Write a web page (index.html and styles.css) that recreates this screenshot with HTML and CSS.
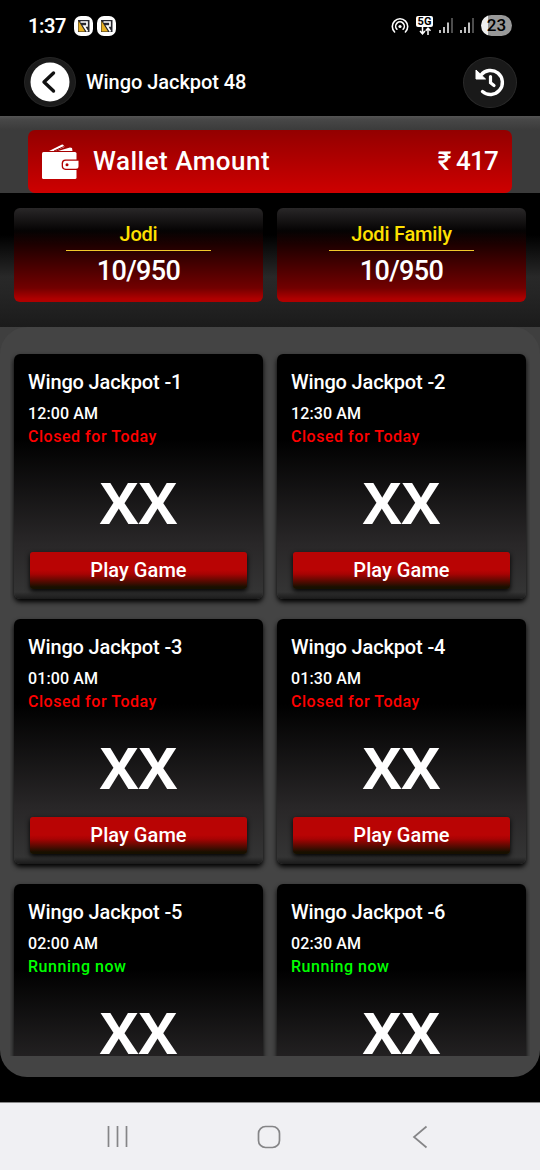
FILE: index.html
```html
<!DOCTYPE html>
<html lang="en">
<head>
<meta charset="utf-8">
<title>Wingo Jackpot 48</title>
<link rel="stylesheet" href="styles.css">
</head>
<body>
<div class="screen">
  <div class="status">
    <span class="clock">1:37</span>
    <svg class="app" viewBox="0 0 19 20"><rect width="19" height="20" rx="7" fill="#fff"/><rect x="4" y="4" width="11.500" height="12" fill="#26262c"/><path d="M4.500 5l6.500 10.500H4.500z" fill="#e8b020"/><path d="M6.500 6H13v4h-3l3.500 5.500" fill="none" stroke="#fff" stroke-width="1.700"/></svg>
    <svg class="app" viewBox="0 0 19 20"><rect width="19" height="20" rx="7" fill="#fff"/><rect x="4" y="4" width="11.500" height="12" fill="#26262c"/><path d="M4.500 5l6.500 10.500H4.500z" fill="#e8b020"/><path d="M6.500 6H13v4h-3l3.500 5.500" fill="none" stroke="#fff" stroke-width="1.700"/></svg>
    <span class="spacer"></span>
    <svg class="hotspot" viewBox="0 0 18 18" fill="none" stroke="#fff" stroke-width="1.600" stroke-linecap="round"><path d="M3.600 15A7.700 7.700 0 1 1 14.400 15M5.900 12.200a4.300 4.300 0 1 1 6.200 0"/><circle cx="9" cy="9.500" r="1.600" fill="#fff" stroke="none"/></svg>
    <span class="net"><span class="fiveg">5G</span><svg width="14" height="8" viewBox="0 0 14 8" fill="none" stroke="#fff" stroke-width="1.500"><path d="M4.500 0v6.500M2 4l2.500 2.800L7 4M10 8V1.200M7.700 3.800L10 1.200l2.500 2.600"/></svg></span>
    <svg class="signal" viewBox="0 0 14 15" stroke-width="1.500"><path d="M1 12v3M5 9v6M9 4.500V15" stroke="#fff"/><path d="M13 0v15" stroke="#666"/></svg>
    <svg class="signal" viewBox="0 0 14 15" stroke-width="1.500"><path d="M1 12v3M5 9v6M9 4.500V15" stroke="#fff"/><path d="M13 0v15" stroke="#666"/></svg>
    <span class="battery">23</span>
  </div>
  <header class="header">
    <span class="back"><svg width="40" height="40" viewBox="0 0 40 40"><circle cx="20" cy="20" r="19.500" fill="#fff"/><path d="M23.500 11L14 20l9.500 9" fill="none" stroke="#111" stroke-width="3.400" stroke-linecap="round" stroke-linejoin="round"/></svg></span>
    <h1>Wingo Jackpot 48</h1>
    <span class="history"><svg width="32" height="30" viewBox="0 0 32 30"><path d="M7 8A12 12 0 1 1 8.500 24.500" fill="none" stroke="#fff" stroke-width="3.400" stroke-linecap="round"/><path d="M2 3v9h9.500z" fill="#fff" stroke="#fff" stroke-linejoin="round"/><path d="M16.500 9.500v6.300l3.500 2.700" fill="none" stroke="#fff" stroke-width="3.200" stroke-linecap="round"/></svg></span>
  </header>
  <section class="strip">
    <div class="wallet">
      <svg width="37" height="35" viewBox="0 0 37 35"><path d="M7 7L19.500.8q1.500-.6 2.200.7l.8 1.500L13 7zM16 7l12-3.500 2 .5.500 3z" fill="#fff"/><path d="M12 7L22 2.500" stroke="#9a0000"/><rect y="8" width="34.500" height="27" rx="1.500" fill="#fff"/><path d="M37 15.500H23.500q-3.800 0-3.800 3.800v2.800q0 3.800 3.800 3.800H37z" fill="#b00000"/><path d="M36.500 16.700H24q-3 0-3 3v2q0 3 3 3h10q2.500 0 2.500-2.500z" fill="#fff"/><circle cx="25" cy="20.700" r="1.500" fill="#b00000"/></svg>
      <span class="wallet-label">Wallet Amount</span>
      <span class="amount">₹ 417</span>
    </div>
  </section>
  <section class="rates">
    <div class="rate"><span class="kind">Jodi</span><strong>10/950</strong></div>
    <div class="rate"><span class="kind">Jodi Family</span><strong>10/950</strong></div>
  </section>
  <main class="floor">
    <div class="panel">
      <div class="games">
        <article class="game"><h2>Wingo Jackpot -1</h2><time>12:00 AM</time><p class="closed">Closed for Today</p><b class="result">XX</b><div class="play">Play Game</div></article>
        <article class="game"><h2>Wingo Jackpot -2</h2><time>12:30 AM</time><p class="closed">Closed for Today</p><b class="result">XX</b><div class="play">Play Game</div></article>
        <article class="game"><h2>Wingo Jackpot -3</h2><time>01:00 AM</time><p class="closed">Closed for Today</p><b class="result">XX</b><div class="play">Play Game</div></article>
        <article class="game"><h2>Wingo Jackpot -4</h2><time>01:30 AM</time><p class="closed">Closed for Today</p><b class="result">XX</b><div class="play">Play Game</div></article>
        <article class="game"><h2>Wingo Jackpot -5</h2><time>02:00 AM</time><p class="running">Running now</p><b class="result">XX</b></article>
        <article class="game"><h2>Wingo Jackpot -6</h2><time>02:30 AM</time><p class="running">Running now</p><b class="result">XX</b></article>
      </div>
    </div>
  </main>
  <nav class="nav">
    <svg width="22" height="22" viewBox="0 0 22 22"><path d="M1.500 0v21M10.500 0v21M19.500 0v21" stroke="#858587" stroke-width="1.700"/></svg>
    <svg width="24" height="24" viewBox="0 0 24 24"><rect x="1.500" y="1.500" width="21" height="21" rx="7" fill="none" stroke="#858587" stroke-width="1.700"/></svg>
    <svg width="16" height="24" viewBox="0 0 16 24"><path d="M14.500 1.500L2 12l12.500 10.500" fill="none" stroke="#858587" stroke-width="1.700"/></svg>
  </nav>
</div>
</body>
</html>
```

FILE: styles.css
```css
* { box-sizing: border-box; }
body, h1, h2, p { margin: 0; }
body { background: #000; color: #fff; font-family: Roboto, "Noto Sans", sans-serif; font-weight: 500; }
svg { display: block; flex: none; }
.screen { width: 540px; height: 1170px; display: flex; flex-direction: column; overflow: hidden; }
.status { height: 51px; flex: none; display: flex; align-items: center; padding: 0 28px 0 28px; }
.clock { width: 46px; font-size: 20px; line-height: 20px; letter-spacing: -.4px; font-weight: 600; }
.app { width: 19px; height: 20px; margin-right: 4px; }
.spacer { flex: 1; }
.hotspot { width: 18px; height: 18px; margin-right: 7px; }
.net { width: 17px; display: flex; flex-direction: column; align-items: center; margin-right: 6px; }
.fiveg { width: 17px; height: 11px; border-radius: 2px; background: #fff; color: #000; font-size: 11px; line-height: 11px; font-weight: 700; text-align: center; }
.signal { width: 14px; height: 15px; margin-right: 7px; }
.battery { width: 31px; height: 21px; border-radius: 11px; background: linear-gradient(90deg, #eee 7px, #999 7px); color: #000; font-size: 17px; line-height: 21px; text-align: center; }
.header { height: 65px; flex: none; display: flex; align-items: center; padding: 0 23px 3px 24px; }
.back { width: 52px; height: 50px; border-radius: 50%; background: #1b1b1b; border: 1px solid #262626; display: flex; align-items: center; justify-content: center; }
.header h1 { font-size: 20px; line-height: 24px; letter-spacing: -.05px; font-weight: 500; margin-left: 10px; flex: 1; }
.history { width: 54px; height: 51px; border-radius: 50%; background: #191919; border: 1px solid #292929; display: flex; align-items: center; justify-content: center; }
.strip { height: 77px; flex: none; padding: 14px 28px 0; background: linear-gradient(#555, #484848 3px, #3b3b3b 14px); }
.wallet { height: 63px; border-radius: 7px; background: linear-gradient(#930000, #ce0000); display: flex; align-items: center; padding: 0 14px; }
.wallet-label { font-size: 26px; line-height: 30px; padding-bottom: 2px; letter-spacing: .48px; margin-left: 14px; flex: 1; }
.amount { font-size: 26px; line-height: 30px; padding-bottom: 2px; letter-spacing: -.8px; }
.rates { height: 134px; flex: none; padding: 15px 14px 0; display: grid; grid-template-columns: 1fr 1fr; gap: 14px; background: linear-gradient(#000 42px, #282828 84px, #252525 100px, #1b1b1b); }
.rate { height: 94px; border-radius: 6px; background: linear-gradient(#292728, #050303 23px, #1c0000 36px, #720000 80px, #b00000 91px); display: flex; flex-direction: column; align-items: center; padding-top: 14px; }
.kind { width: 145px; height: 29px; border-bottom: 1px solid #f1c92b; color: #ffe000; font-size: 20px; line-height: 25px; letter-spacing: -.2px; text-align: center; }
.rate strong { font-size: 27px; line-height: 32px; letter-spacing: -.65px; margin-top: 4px; font-weight: 500; }
.floor { height: 775px; flex: none; background: linear-gradient(#3f3f3f 100px, #000 500px); }
.panel { height: 750px; background: #444; border-radius: 27px; padding: 23px 10px 21px; }
.games { height: 706px; overflow: hidden; padding: 4px; display: grid; grid-template-columns: 1fr 1fr; gap: 20px 14px; align-content: start; }
.game { height: 245px; border-radius: 6px; background: linear-gradient(#000 85px, #292728 190px, #343434 238px, #1a1a1a); box-shadow: 0 3px 5px #000; display: flex; flex-direction: column; padding: 16px 16px 0; }
.game h2 { font-size: 20px; line-height: 24px; letter-spacing: -.15px; margin-left: -2px; font-weight: 500; }
.game time { font-size: 16px; line-height: 20px; letter-spacing: .1px; margin: 10px 0 0 -2px; }
.game p { font-size: 16px; line-height: 22px; letter-spacing: .53px; margin: 2px 0 0 -2px; }
.closed { color: #f00; }
.running { color: #0f0; }
.result { font-family: "Open Sans", sans-serif; font-weight: 700; font-size: 58px; line-height: 56px; text-align: center; margin-top: 26px; }
.play { height: 37px; margin-top: 22px; border-radius: 3px; background: linear-gradient(#b90404 18px, #a70303 22px, #171000 35px); box-shadow: 0 2px 5px #000; font-size: 20px; line-height: 36px; letter-spacing: .05px; text-align: center; }
.nav { height: 68px; flex: none; background: #f0f0f3; border-top: 1px solid #888; display: grid; grid-template-columns: 150px 155px 16px; align-items: center; padding-left: 107px; }
```
